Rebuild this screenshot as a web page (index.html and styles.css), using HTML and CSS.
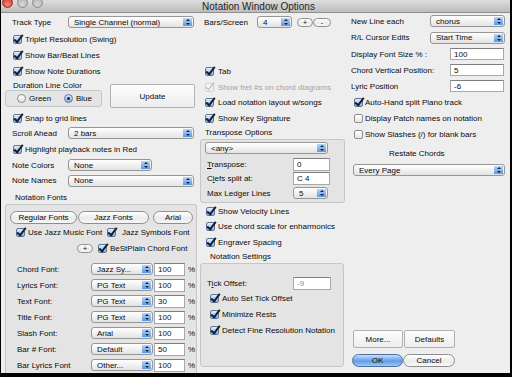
FILE: index.html
```html
<!DOCTYPE html>
<html lang="en">
<head>
  <meta charset="UTF-8" />
  <title>Notation Window Options</title>
  <link rel="stylesheet" href="styles.css">
</head>
<body>
  <div class="window">
    <div class="titlebar">
      <div class="lights"><span class="light red"></span><span class="light"></span><span class="light"></span></div>
      <div class="title">Notation Window Options</div>
    </div>

    <div class="content">
      <!-- left column -->
      <div class="col col-left">
        <div class="row h18 pl11"><span class="lbl" style="width:56px">Track Type</span><div class="sel" style="width:126px">Single Channel (normal)</div></div>
        <div class="row h16 pl12"><span class="cb on"></span><span class="txt">Triplet Resolution (Swing)</span></div>
        <div class="row h16 pl12"><span class="cb on"></span><span class="txt">Show Bar/Beat Lines</span></div>
        <div class="row h16 pl12"><span class="cb on"></span><span class="txt">Show Note Durations</span></div>
        <div class="dur-block">
          <div class="dur-left">
            <div class="dur-label">Duration Line Color</div>
            <div class="radio-box">
              <span class="radio-item first"><span class="rb"></span>Green</span>
              <span class="radio-item"><span class="rb on"></span>Blue</span>
            </div>
          </div>
          <div class="btn-rect update">Update</div>
        </div>
        <div class="row h15 pl12"><span class="cb on"></span><span class="txt">Snap to grid lines</span></div>
        <div class="row h14 pl11"><span class="lbl" style="width:56px">Scroll Ahead</span><div class="sel" style="width:126px">2 bars</div></div>
        <div class="row h18 pl12"><span class="cb on"></span><span class="txt">Highlight playback notes in Red</span></div>
        <div class="row h14 pl11"><span class="lbl" style="width:56px">Note Colors</span><div class="sel" style="width:84px">None</div></div>
        <div class="row h17 pl11"><span class="lbl" style="width:56px">Note Names</span><div class="sel" style="width:126px">None</div></div>
        <div class="row h15 pl14 section-label">Notation Fonts</div>

        <div class="group fonts-group">
          <div class="font-buttons">
            <div class="pill" style="width:67px">Regular Fonts</div>
            <div class="pill" style="width:71px;margin-left:1px">Jazz Fonts</div>
            <div class="pill" style="width:40px;margin-left:4px">Arial</div>
          </div>
          <div class="row h17 pl10">
            <span class="check-item" style="width:91px"><span class="cb on"></span><span class="txt">Use Jazz Music Font</span></span>
            <span class="check-item wide"><span class="cb on"></span><span class="txt">Jazz Symbols Font</span></span>
          </div>
          <div class="row h14 plus-row">
            <div class="pill small">+</div>
            <span class="cb on"></span><span class="txt">BeStPlain Chord Font</span>
          </div>
          <div class="font-rows">
            <div class="row h16 font-row"><span class="lbl">Chord Font:</span><div class="sel">Jazz Sy...</div><div class="field">100</div><span class="pct">%</span></div>
            <div class="row h16 font-row"><span class="lbl">Lyrics Font:</span><div class="sel">PG Text</div><div class="field">100</div><span class="pct">%</span></div>
            <div class="row h16 font-row"><span class="lbl">Text Font:</span><div class="sel">PG Text</div><div class="field">30</div><span class="pct">%</span></div>
            <div class="row h16 font-row"><span class="lbl">Title Font:</span><div class="sel">PG Text</div><div class="field">100</div><span class="pct">%</span></div>
            <div class="row h16 font-row"><span class="lbl">Slash Font:</span><div class="sel">Arial</div><div class="field">100</div><span class="pct">%</span></div>
            <div class="row h16 font-row"><span class="lbl">Bar # Font:</span><div class="sel">Default</div><div class="field">50</div><span class="pct">%</span></div>
            <div class="row h16 font-row"><span class="lbl">Bar Lyrics Font</span><div class="sel">Other...</div><div class="field">100</div><span class="pct">%</span></div>
          </div>
        </div>
      </div>

      <!-- middle column -->
      <div class="col col-mid">
        <div class="row h18 pl4">
          <span class="lbl" style="width:53px">Bars/Screen</span>
          <div class="sel" style="width:35px">4</div>
          <div class="pill small" style="margin-left:5px">+</div>
          <div class="pill small" style="width:18px">-</div>
        </div>
        <div class="spacer32"></div>
        <div class="row h16 pl5"><span class="cb on"></span><span class="txt g4">Tab</span></div>
        <div class="row h16 pl5"><span class="cb dis"></span><span class="txt g4 disabled">Show fret #s on chord diagrams</span></div>
        <div class="row h15 pl5"><span class="cb on"></span><span class="txt g4">Load notation layout w/songs</span></div>
        <div class="row h16 pl5"><span class="cb on"></span><span class="txt g4">Show Key Signature</span></div>
        <div class="row h13 pl5 section-label">Transpose Options</div>
        <div class="group transpose-group">
          <div class="row h12"><div class="sel" style="width:123px;margin-left:4px">&lt;any&gt;</div></div>
          <div class="row h14 mt3 pl6"><span class="lbl" style="width:86px"><u>T</u>ranspose:</span><div class="field" style="width:37px">0</div></div>
          <div class="row h15 pl6"><span class="lbl" style="width:86px">C<u>l</u>efs split at:</span><div class="field" style="width:37px">C 4</div></div>
          <div class="row h14 pl6"><span class="lbl" style="width:86px">Max Ledger Lines</span><div class="sel" style="width:35px">5</div></div>
        </div>
        <div class="row h16 pl6"><span class="cb on"></span><span class="txt g3">Show Velocity Lines</span></div>
        <div class="row h15 pl6"><span class="cb on"></span><span class="txt g3">Use chord scale for enharmonics</span></div>
        <div class="row h16 pl6"><span class="cb on"></span><span class="txt g3">Engraver Spacing</span></div>
        <div class="row h13 pl10 section-label">Notation Settings</div>
        <div class="group settings-group">
          <div class="row h14 pl6"><span class="lbl" style="width:86px">T<u>i</u>ck Offset:</span><div class="field muted" style="width:38px">-9</div></div>
          <div class="row h17 pl9"><span class="cb on"></span><span class="txt">Auto Set Tick Offset</span></div>
          <div class="row h15 pl9"><span class="cb on"></span><span class="txt">Minimize Rests</span></div>
          <div class="row h16 pl9"><span class="cb on"></span><span class="txt">Detect Fine Resolution Notation</span></div>
        </div>
      </div>

      <!-- right column -->
      <div class="col col-right">
        <div class="row h16 pl1"><span class="lbl" style="width:79px">New Line each</span><div class="sel" style="width:75px">chorus</div></div>
        <div class="row h17 pl1"><span class="lbl" style="width:79px">R/L Cursor Edits</span><div class="sel" style="width:75px">Start Time</div></div>
        <div class="row h16 pl1"><span class="lbl" style="width:99px">Display Font Size % :</span><div class="field" style="width:54px;height:12px">100</div></div>
        <div class="row h16 pl1"><span class="lbl" style="width:99px">Chord Vertical Position:</span><div class="field" style="width:54px;height:12px">5</div></div>
        <div class="row h16 pl1"><span class="lbl" style="width:99px">Lyric Position</span><div class="field" style="width:54px;height:12px">-6</div></div>
        <div class="row h17 pl4"><span class="cb on"></span><span class="txt g2">Auto-Hand split Piano track</span></div>
        <div class="row h15 pl4"><span class="cb off"></span><span class="txt g2">Display Patch names on notation</span></div>
        <div class="row h17 pl4"><span class="cb off"></span><span class="txt g2">Show Slashes (/) for blank bars</span></div>
        <div class="row h20 restate">Restate Chords</div>
        <div class="row h14 pl3"><div class="sel" style="width:152px">Every Page</div></div>
        <div class="fill"></div>
        <div class="row h18 pl3 btn-row">
          <div class="btn-rect" style="width:50px">More...</div>
          <div class="btn-rect" style="width:51px;margin-left:1px">Defaults</div>
        </div>
        <div class="row h14 pl2 btn-row ok-row">
          <div class="pill ok" style="width:51px">OK</div>
          <div class="pill" style="width:52px">Cancel</div>
        </div>
      </div>
    </div>
  </div>
</body>
</html>
```

FILE: styles.css
```css
* {
  box-sizing: border-box;
}
body {
  margin: 0;
  background: #000;
  font-family: "Liberation Sans", Arial, sans-serif;
  font-size: 8px;
  color: #0a0a0a;
}
.window {
  width: 509px;
  height: 373px;
  margin-left: 1px;
  background: #eeeeee;
  display: flex;
  flex-direction: column;
  overflow: hidden;
}

/* title bar */
.titlebar {
  height: 13px;
  flex: none;
  display: flex;
  align-items: center;
  background: linear-gradient(#dedede, #bcbcbc);
  border-bottom: 1px solid #8f8f8f;
  overflow: hidden;
}
.lights {
  display: flex;
  gap: 4px;
  margin-left: 1px;
  margin-top: -7px;
}
.light {
  width: 11px;
  height: 11px;
  border-radius: 50%;
  background: radial-gradient(circle at 50% 70%, #d9d9d9, #a9a9a9);
  border: 1px solid #8c8c8c;
}
.light.red {
  background: radial-gradient(circle at 50% 70%, #f28a7c, #c8281c);
  border-color: #9a2a20;
}
.title {
  flex: 1;
  text-align: center;
  padding-right: 36px;
  font-size: 10px;
  color: #1e1e1e;
}

.content {
  flex: 1;
  display: flex;
}
.col {
  display: flex;
  flex-direction: column;
}
.col-left { width: 199px; }
.col-mid { width: 150px; }
.col-right { width: 160px; }

.row {
  display: flex;
  align-items: center;
  flex: none;
  white-space: nowrap;
}
.h12 { height: 12px; }
.h13 { height: 13px; }
.h14 { height: 14px; }
.h15 { height: 15px; }
.h16 { height: 16px; }
.h17 { height: 17px; }
.h18 { height: 18px; }
.h20 { height: 20px; }
.pl1 { padding-left: 1px; }
.pl2 { padding-left: 2px; }
.pl3 { padding-left: 3px; }
.pl4 { padding-left: 4px; }
.pl5 { padding-left: 5px; }
.pl6 { padding-left: 6px; }
.pl9 { padding-left: 9px; }
.pl10 { padding-left: 10px; }
.pl11 { padding-left: 11px; }
.pl12 { padding-left: 12px; }
.pl14 { padding-left: 14px; }
.mt3 { margin-top: 3px; }

.lbl {
  flex: none;
}
.txt {
  margin-left: 3px;
}
.txt.g2 { margin-left: 2px; }
.txt.g3 { margin-left: 3px; }
.txt.g4 { margin-left: 4px; }
.txt.disabled { color: #a3a3a3; }
.section-label {
  align-items: flex-end;
  padding-bottom: 2px;
}

/* checkboxes */
.cb {
  position: relative;
  flex: none;
  width: 9px;
  height: 9px;
  border: 1px solid #5f7696;
  border-radius: 2px;
  background: linear-gradient(#e2eefc, #86b5ed);
}
.cb.on::after {
  content: "";
  position: absolute;
  left: 2px;
  top: -3px;
  width: 3px;
  height: 8px;
  border: solid #15202e;
  border-width: 0 2px 2px 0;
  transform: rotate(38deg);
}
.cb.off {
  border-color: #8e8e8e;
  background: linear-gradient(#ffffff, #e6e6e6);
}
.cb.dis {
  border-color: #d2d2d2;
  background: #f3f3f3;
}
.cb.dis::after {
  content: "";
  position: absolute;
  left: 2px;
  top: -3px;
  width: 3px;
  height: 8px;
  border: solid #b3b3b3;
  border-width: 0 1px 1px 0;
  transform: rotate(38deg);
}

/* radios */
.rb {
  position: relative;
  flex: none;
  width: 9px;
  height: 9px;
  border-radius: 50%;
  border: 1px solid #8a8a8a;
  background: linear-gradient(#ffffff, #e2e2e2);
  margin-right: 3px;
}
.rb.on {
  border-color: #58779f;
  background: linear-gradient(#d5e6fb, #86b4ec);
}
.rb.on::after {
  content: "";
  position: absolute;
  left: 2px;
  top: 2px;
  width: 3px;
  height: 3px;
  border-radius: 50%;
  background: #1a2434;
}

/* popups */
.sel {
  position: relative;
  flex: none;
  height: 12px;
  border: 1px solid #969696;
  border-radius: 3px;
  padding-left: 5px;
  display: flex;
  align-items: center;
  overflow: hidden;
  background:
    linear-gradient(#b9d6f7, #5d98e3) right 1px top 1px / 9px 8px no-repeat,
    linear-gradient(#ffffff, #e3e3e3);
}
.sel::before,
.sel::after {
  content: "";
  position: absolute;
  right: 3px;
  border-left: 2.5px solid transparent;
  border-right: 2.5px solid transparent;
}
.sel::before {
  top: 2px;
  border-bottom: 2.5px solid #17273d;
}
.sel::after {
  bottom: 2px;
  border-top: 2.5px solid #17273d;
}

/* fields */
.field {
  flex: none;
  height: 13px;
  background: #fff;
  border: 1px solid #a8a8a8;
  border-top-color: #7f7f7f;
  padding-left: 3px;
  display: flex;
  align-items: center;
}
.field.muted { color: #8c8c8c; }

/* buttons */
.btn-rect {
  flex: none;
  display: flex;
  align-items: center;
  justify-content: center;
  border: 1px solid #b2b2b2;
  border-radius: 2px;
  background: linear-gradient(#fdfdfd, #ededed);
}
.pill {
  flex: none;
  height: 13px;
  display: flex;
  align-items: center;
  justify-content: center;
  border: 1px solid #8e8e8e;
  border-radius: 7px;
  background: linear-gradient(#ffffff, #ebebeb 55%, #f7f7f7);
}
.pill.small {
  width: 16px;
  height: 9px;
  font-size: 7px;
  line-height: 1;
}
.pill.ok {
  border-color: #4a6f9a;
  background: linear-gradient(#c6defa, #5f9de8 55%, #9cc8f5);
}

/* duration block */
.dur-block {
  display: flex;
  height: 32px;
  flex: none;
}
.dur-left {
  margin-left: 4px;
  padding-top: 2px;
}
.dur-label {
  line-height: 10px;
  padding-left: 8px;
}
.radio-box {
  width: 97px;
  height: 17px;
  margin-top: -1px;
  display: flex;
  align-items: center;
  padding-left: 11px;
  border: 1px solid #c6c6c6;
  border-radius: 3px;
  background: #e4e4e4;
}
.radio-item {
  display: flex;
  align-items: center;
}
.radio-item.first { width: 47px; }
.update {
  width: 85px;
  height: 24px;
  margin: 5px 0 0 8px;
}

/* group boxes */
.group {
  border: 1px solid #c6c6c6;
  border-radius: 3px;
  background: #e4e4e4;
  display: flex;
  flex-direction: column;
  flex: none;
}
.fonts-group {
  flex: 1;
  margin: 0 3px 0 4px;
  padding-top: 6px;
  border-bottom: none;
  border-radius: 3px 3px 0 0;
}
.font-buttons {
  display: flex;
  height: 13px;
  padding-left: 4px;
}
.check-item {
  display: flex;
  align-items: center;
}
.check-item.wide .txt { margin-left: 6px; }
.plus-row { padding-left: 71px; }
.plus-row .pill { margin-right: 5px; }
.font-rows {
  margin-top: 6px;
  display: flex;
  flex-direction: column;
}
.font-row { padding-left: 11px; }
.font-row .lbl { width: 74px; }
.font-row .sel { width: 62px; }
.font-row .field { width: 31px; margin-left: 1px; }
.pct { margin-left: 3px; }

.spacer32 {
  height: 32px;
  flex: none;
}
.transpose-group {
  width: 145px;
  height: 64px;
  padding-top: 2px;
}
.settings-group {
  width: 144px;
  height: 104px;
  padding-top: 12px;
}

.restate {
  padding-left: 39px;
}
.fill { flex: 1; }
.btn-row .btn-rect { height: 18px; }
.ok-row { margin-top: 5px; margin-bottom: 6px; }
```
